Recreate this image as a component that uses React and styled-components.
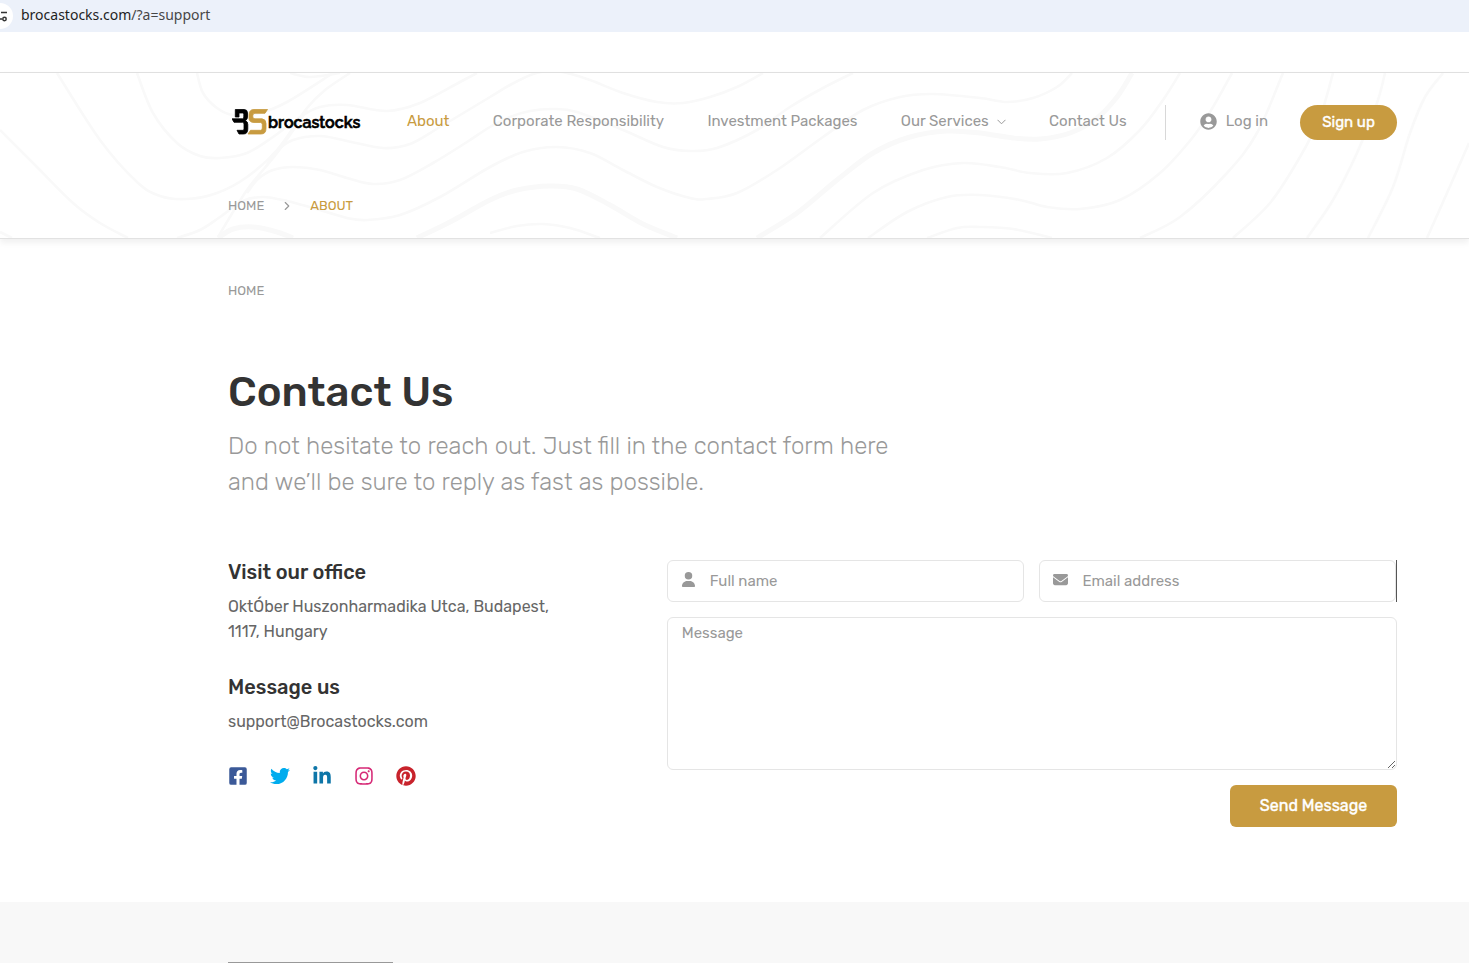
import React from "react";
import styled, { createGlobalStyle } from "styled-components";
import {
    FaFacebookSquare,
    FaTwitter,
    FaLinkedinIn,
    FaInstagram,
    FaPinterest,
    FaUserCircle,
} from "react-icons/fa";
import { FaUser, FaEnvelope } from "react-icons/fa6";
import { ChevronRight } from "lucide-react";

const gold = "#c89b40";

const GlobalStyle = createGlobalStyle`
    * {
        box-sizing: border-box;
    }

    body {
        margin: 0;
        background: #fff;
        color: #666;
        font-family: Rubik, Roboto, "Liberation Sans", sans-serif;
        font-size: 16px;
        line-height: 25px;
    }

    a {
        color: inherit;
        text-decoration: none;
    }

    h1, h2, p {
        margin: 0;
    }
`;

const AddressBar = styled.div`
    display: flex;
    align-items: center;
    gap: 8px;
    height: 32px;
    background: #ecf1fa;
    color: #474747;
    font-family: "Noto Sans", sans-serif;
    font-size: 14px;
    line-height: 20px;
    overflow: hidden;
`;

const SiteInfo = styled.span`
    width: 13px;
    height: 26px;
    border-radius: 0 13px 13px 0;
    background: #fff;
`;

const AddressText = styled.span`
    padding-bottom: 2px;
`;

const Domain = styled.span`
    color: #1f1f1f;
`;

const Hero = styled.header`
    position: relative;
    margin-top: 40px;
    padding: 32px 72px 20px 228px;
    border-top: 1px solid #e0e0e0;
    border-bottom: 1px solid #e2e2e2;
    box-shadow: 0 4px 6px rgba(0, 0, 0, 0.06);
`;

const Waves = styled.svg`
    position: absolute;
    inset: 0;
    width: 100%;
    height: 100%;
    fill: none;
    stroke: #f9f9f9;
`;

const TopRow = styled.div`
    position: relative;
    display: flex;
    align-items: center;
    height: 35px;
`;

const Logo = styled.a`
    display: flex;
    align-items: center;
    width: 179px;
    padding: 0 0 1px 4px;
    color: #000;
    font-family: Raleway, Lato, sans-serif;
    font-size: 16px;
    font-weight: 600;
    -webkit-text-stroke: 0.6px #000;
`;

const Nav = styled.nav`
    display: flex;
    flex: 1;
    justify-content: space-between;
    padding-right: 38px;
`;

const NavLink = styled.a`
    display: flex;
    align-items: center;
    gap: 8px;
    height: 32px;
    padding-bottom: 2px;
    color: ${(props) => (props.$active ? gold : "#999")};
    font-size: 15px;
`;

const Account = styled.div`
    display: flex;
    align-items: center;
    gap: 32px;
    height: 35px;
    padding-left: 34px;
    border-left: 1px solid #d8d8d8;
`;

const LoginLink = styled(NavLink)`
    gap: 9px;
`;

const SignUp = styled.button`
    width: 97px;
    height: 35px;
    padding: 0 0 2px;
    border: 0;
    border-radius: 18px;
    background: ${gold};
    color: #fff;
    font-family: inherit;
    font-size: 15px;
    -webkit-text-stroke: 0.4px #fff;
`;

const Crumbs = styled.nav`
    position: relative;
    display: flex;
    align-items: center;
    gap: 16px;
    margin-top: ${(props) => props.$top};
    color: #999;
    font-size: 13px;
    line-height: 25px;
    text-transform: uppercase;
`;

const Current = styled.span`
    color: ${gold};
`;

const Main = styled.main`
    padding: 0 72px 75px 228px;
`;

const Title = styled.h1`
    margin-top: 64px;
    color: #333;
    font-size: 42px;
    font-weight: 500;
    line-height: 50px;
`;

const Lead = styled.p`
    max-width: 700px;
    margin-top: 11px;
    color: #999;
    font-size: 24px;
    font-weight: 300;
    line-height: 36px;
`;

const Columns = styled.div`
    display: grid;
    grid-template-columns: minmax(0, 11fr) minmax(0, 19fr);
    column-gap: 16px;
    margin-top: 60px;
`;

const SubTitle = styled.h2`
    margin-bottom: 9px;
    color: #333;
    font-size: 20px;
    font-weight: 500;
    line-height: 25px;
`;

const Info = styled.address`
    max-width: 340px;
    margin-bottom: 31px;
    font-style: normal;
`;

const Social = styled.div`
    display: flex;
    align-items: center;
    gap: 22px;
    padding-top: 1px;
`;

const SocialLink = styled.a`
    display: flex;
    color: ${(props) => props.$color};
    font-size: 20px;
`;

const Form = styled.form`
    display: grid;
    grid-template-columns: 1fr 1fr;
    gap: 15px;
`;

const Field = styled.label`
    position: relative;
    display: flex;
    color: #999;
    border-right: ${(props) => (props.$edge ? "1px solid #555" : "0")};

    svg {
        position: absolute;
        top: 12px;
        left: 14px;
    }
`;

const Input = styled.input`
    width: 100%;
    height: 42px;
    padding: 0 15px 0 42px;
    border: 1px solid #e5e5e5;
    border-radius: 6px;
    background: #fff;
    font-family: inherit;
    font-size: 15px;

    &::placeholder {
        color: #999;
    }
`;

const Message = styled.textarea`
    display: block;
    grid-column: 1 / -1;
    width: 100%;
    height: 153px;
    padding: 3px 14px;
    border: 1px solid #e5e5e5;
    border-radius: 6px;
    background: #fff;
    font-family: inherit;
    font-size: 15px;
    line-height: 25px;
    resize: vertical;

    &::placeholder {
        color: #999;
    }
`;

const Send = styled.button`
    grid-column: 2;
    justify-self: end;
    width: 167px;
    height: 42px;
    padding: 0 0 2px;
    border: 0;
    border-radius: 6px;
    background: ${gold};
    color: #fff;
    font-family: inherit;
    font-size: 16px;
    -webkit-text-stroke: 0.4px #fff;
`;

const Footer = styled.footer`
    padding: 60px 72px 0 228px;
    background: #f8f8f8;
`;

const FooterRule = styled.div`
    width: 165px;
    height: 1px;
    background: #999;
`;

// contour lines of the header, each a list of points the curve runs through
const contours = [
    { pts: [[0, 57], [33, 90], [73, 130], [100, 150], [128, 165]] },
    { pts: [[0, 159], [12, 165]] },
    { pts: [[57, 0], [100, 67], [137, 109], [160, 123], [187, 126], [217, 120], [247, 104], [277, 77], [307, 35], [325, 17], [350, 0]] },
    { pts: [[137, 0], [153, 40], [177, 70], [200, 83], [220, 85], [247, 80], [273, 64], [300, 44], [320, 34], [347, 32], [387, 38], [420, 30], [460, 9], [477, 0]] },
    { pts: [[197, 0], [203, 20], [217, 35], [233, 42], [260, 40], [287, 29], [333, 0]] },
    { pts: [[290, 0], [310, 4], [340, 0]] },
    { pts: [[218, 164], [247, 117], [277, 80], [307, 37]] },
    { pts: [[177, 165], [200, 157], [220, 144], [243, 128], [263, 124], [287, 128], [320, 137], [347, 145], [367, 147], [400, 142], [440, 124], [490, 94], [523, 79], [557, 74], [590, 80], [623, 97], [657, 114], [690, 125], [707, 126], [737, 120], [777, 97], [823, 64], [863, 37], [900, 24], [933, 21], [980, 25], [1007, 29], [1033, 25], [1057, 14], [1072, 0]] },
    { pts: [[247, 120], [258, 106], [273, 97], [293, 94], [320, 97], [347, 105], [373, 111], [400, 107], [433, 90], [467, 69], [490, 54], [510, 44], [530, 38], [553, 36], [577, 39], [623, 57], [663, 74], [690, 78], [717, 75], [757, 57], [790, 34], [823, 15], [853, 0]] },
    { pts: [[265, 95], [277, 78], [293, 67], [320, 63], [347, 68], [383, 75], [410, 71], [440, 54], [490, 24], [510, 12], [533, 1], [550, -2], [567, 0], [590, 7], [623, 20], [657, 29], [683, 30], [710, 24], [737, 14], [763, 0]] },
    { thick: true, pts: [[218, 165], [233, 156], [253, 154], [277, 159], [293, 165]] },
    { thick: true, pts: [[417, 165], [450, 149], [490, 127], [517, 117], [550, 113], [577, 116], [610, 132], [643, 151], [677, 165]] },
    { pts: [[490, 160], [517, 153], [543, 151], [570, 155], [600, 165]] },
    { thick: true, pts: [[757, 165], [797, 140], [837, 107], [873, 80], [910, 64], [947, 58], [980, 60], [1013, 65], [1040, 66], [1070, 60], [1097, 45], [1117, 24], [1132, 0]] },
    { pts: [[820, 165], [873, 120], [923, 97], [963, 90], [1000, 94], [1030, 100], [1067, 100], [1107, 85], [1140, 57], [1163, 27], [1180, 0]] },
    { pts: [[868, 165], [907, 139], [947, 124], [980, 122], [1020, 127], [1047, 134], [1080, 136], [1120, 127], [1160, 100], [1193, 64], [1213, 34], [1232, 0]] },
    { pts: [[927, 165], [957, 155], [980, 154], [1013, 156], [1052, 165]] },
    { pts: [[1140, 165], [1180, 144], [1227, 100], [1257, 60], [1283, 0]] },
    { pts: [[1233, 165], [1270, 130], [1300, 84], [1320, 44], [1333, 0]] },
    { pts: [[1307, 165], [1333, 127], [1357, 80], [1377, 30], [1385, 0]] },
    { pts: [[1368, 165], [1393, 114], [1410, 60], [1425, 24], [1443, 0]] },
    { pts: [[1427, 165], [1447, 120], [1469, 70]] },
];

function smoothPath(pts) {
    let d = `M${pts[0][0]} ${pts[0][1]}`;
    for (let i = 0; i < pts.length - 1; i++) {
        const before = pts[i - 1] || pts[i];
        const from = pts[i];
        const to = pts[i + 1];
        const after = pts[i + 2] || to;
        const x1 = from[0] + (to[0] - before[0]) / 6;
        const y1 = from[1] + (to[1] - before[1]) / 6;
        const x2 = to[0] - (after[0] - from[0]) / 6;
        const y2 = to[1] - (after[1] - from[1]) / 6;
        d += `C${x1} ${y1} ${x2} ${y2} ${to[0]} ${to[1]}`;
    }
    return d;
}

function HeaderWaves() {
    return (
        <Waves viewBox="0 0 1469 165" preserveAspectRatio="none" aria-hidden="true">
            {contours.map((line, i) => (
                <path key={i} d={smoothPath(line.pts)} strokeWidth={line.thick ? 5 : 2.6} />
            ))}
        </Waves>
    );
}

function LogoMark() {
    return (
        <svg width="36" height="26" viewBox="0 0 36 26" fill="none" strokeWidth="0.8" aria-hidden="true">
            <path
                d="M3.300 0.500H12Q15.500 0.500 15.500 4V8Q15.500 10.500 13.500 11.500Q15.800 12.500 15.800 15.500V20Q15.800 25 11.500 25H7L5 21.300H11Q12 21.300 12 20V15Q12 13.300 10.500 13.300H2L0 9.800H10.500Q11.800 9.800 11.800 8V5.500Q11.800 4 10.500 4H7V8H3.300Z"
                fill="#000"
                stroke="#000"
            />
            <path
                d="M35.500 0.500L33 4.300H23Q20.800 4.300 20.800 6.500V8Q20.800 9.800 23 9.800H30Q34 10.300 34 14.500V19.500Q34 25 29 25H16L18.500 21.300H28.500Q30.300 21.300 30.300 19V15.500Q30.300 13.500 28.500 13.500H22Q17 13.300 17 9V6Q17 0.500 22 0.500Z"
                fill={gold}
                stroke={gold}
            />
        </svg>
    );
}

function MenuArrow() {
    return (
        <svg width="9" height="6" viewBox="0 0 9 6" fill="none" stroke="currentColor" aria-hidden="true">
            <path d="M0.500 0.800L4.500 4.800L8.500 0.800" />
        </svg>
    );
}

const socials = [
    { name: "Facebook", icon: FaFacebookSquare, color: "#3b5998" },
    { name: "Twitter", icon: FaTwitter, color: "#00acee" },
    { name: "LinkedIn", icon: FaLinkedinIn, color: "#0e76a8" },
    { name: "Instagram", icon: FaInstagram, color: "#d62976" },
    { name: "Pinterest", icon: FaPinterest, color: "#c8232c" },
];

function App() {
    return (
        <>
            <GlobalStyle />
            <AddressBar>
                <SiteInfo>
                    <svg width="13" height="26" viewBox="0 0 13 26" fill="none" stroke="#333" strokeWidth="1.5" aria-hidden="true">
                        <path d="M1 9.500H7M0 16H2" />
                        <circle cx="4.500" cy="16" r="1.700" />
                    </svg>
                </SiteInfo>
                <AddressText><Domain>brocastocks.com</Domain>/?a=support</AddressText>
            </AddressBar>
            <Hero>
                <HeaderWaves />
                <TopRow>
                    <Logo href="#">
                        <LogoMark />
                        brocastocks
                    </Logo>
                    <Nav>
                        <NavLink href="#" $active>About</NavLink>
                        <NavLink href="#">Corporate Responsibility</NavLink>
                        <NavLink href="#">Investment Packages</NavLink>
                        <NavLink href="#">
                            Our Services
                            <MenuArrow />
                        </NavLink>
                        <NavLink href="#">Contact Us</NavLink>
                    </Nav>
                    <Account>
                        <LoginLink href="#">
                            <FaUserCircle size={17} />
                            Log in
                        </LoginLink>
                        <SignUp type="button">Sign up</SignUp>
                    </Account>
                </TopRow>
                <Crumbs $top="53px">
                    <a href="#">Home</a>
                    <ChevronRight size={14} />
                    <Current>About</Current>
                </Crumbs>
            </Hero>
            <Main>
                <Crumbs $top="39px">
                    <a href="#">Home</a>
                </Crumbs>
                <Title>Contact Us</Title>
                <Lead>
                    Do not hesitate to reach out. Just fill in the contact form here
                    and we’ll be sure to reply as fast as possible.
                </Lead>
                <Columns>
                    <div>
                        <SubTitle>Visit our office</SubTitle>
                        <Info>OktÓber Huszonharmadika Utca, Budapest, 1117, Hungary</Info>
                        <SubTitle>Message us</SubTitle>
                        <Info><a href="#">support@Brocastocks.com</a></Info>
                        <Social>
                            {socials.map(({ name, icon: Icon, color }) => (
                                <SocialLink key={name} href="#" aria-label={name} $color={color}>
                                    <Icon />
                                </SocialLink>
                            ))}
                        </Social>
                    </div>
                    <Form>
                        <Field>
                            <FaUser size={15} />
                            <Input type="text" aria-label="Full name" placeholder="Full name" />
                        </Field>
                        <Field $edge>
                            <FaEnvelope size={15} />
                            <Input type="email" aria-label="Email address" placeholder="Email address" />
                        </Field>
                        <Message aria-label="Message" placeholder="Message" />
                        <Send type="button">Send Message</Send>
                    </Form>
                </Columns>
            </Main>
            <Footer>
                <FooterRule />
            </Footer>
        </>
    );
}

export default App;
